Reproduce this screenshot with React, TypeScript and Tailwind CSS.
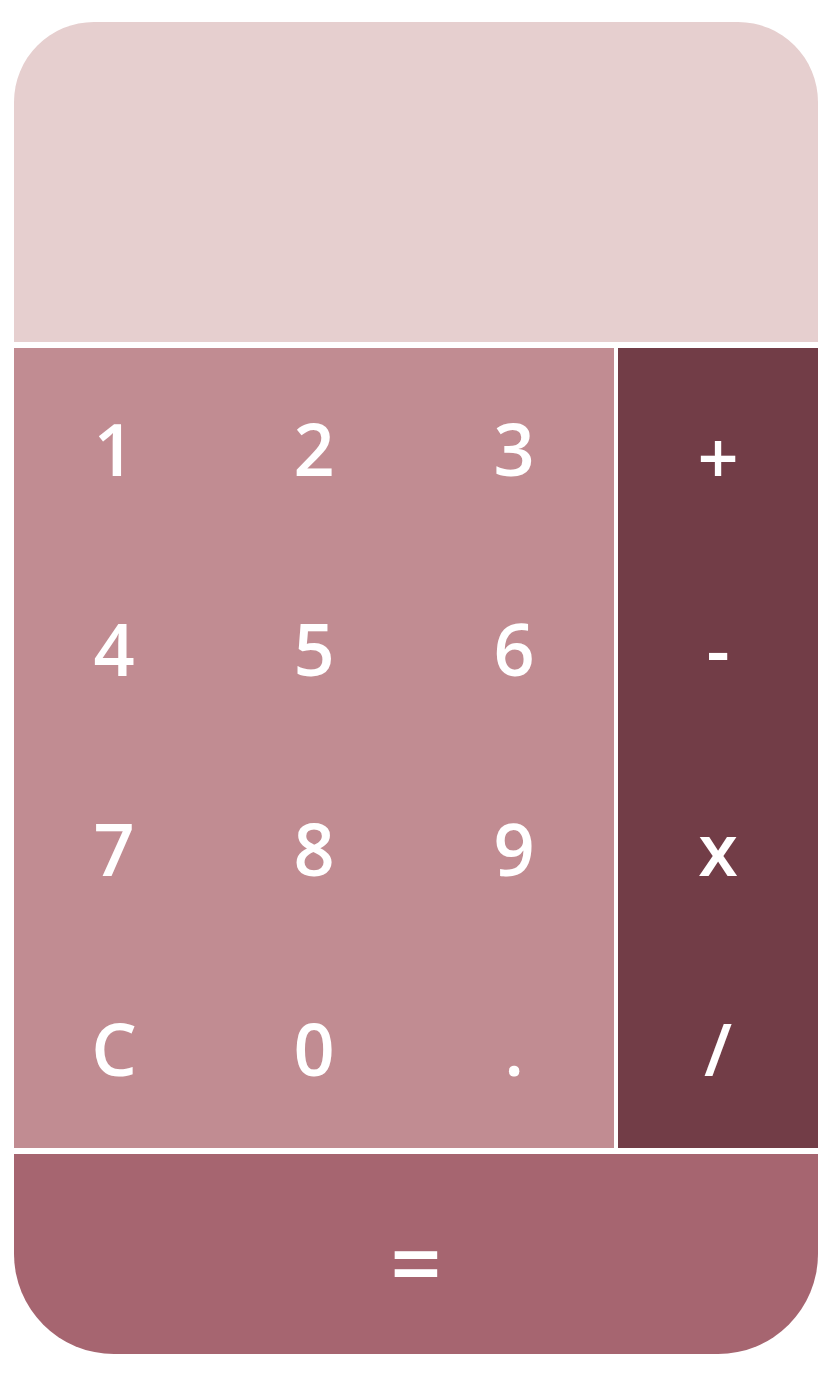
export default function App() {
  const digits = ["1", "2", "3", "4", "5", "6", "7", "8", "9", "C", "0", "."];
  const ops = ["+", "-", "x", "/"];

  return (
    <div className="min-h-screen w-[840px] bg-white pt-[22px] px-[14px] font-['Open_Sans',sans-serif] text-white">
      <div className="flex w-[804px] flex-col gap-[6px]">
        <div className="h-[320px] rounded-tl-[80px] rounded-tr-[80px] bg-[#e6cfcf]"></div>

        <div className="flex gap-[4px]">
          <div className="grid w-[600px] grid-cols-3 bg-[#c18c92]">
            {digits.map((d) => (
              <button key={d} className="flex h-[200px] items-center justify-center text-[72px] font-semibold leading-none">
                {d}
              </button>
            ))}
          </div>
          <div className="flex w-[200px] flex-col bg-[#723d47]">
            {ops.map((o) => (
              <button
                key={o}
                className={
                  o === "+"
                    ? "flex h-[200px] items-center justify-center pt-[16px] text-[72px] font-semibold leading-none"
                    : "flex h-[200px] items-center justify-center text-[72px] font-semibold leading-none"
                }
              >
                {o}
              </button>
            ))}
          </div>
        </div>

        <button className="flex h-[200px] items-center justify-center rounded-bl-[100px] rounded-br-[100px] bg-[#a66570] pt-[14px] text-[90px] font-semibold leading-none">
          =
        </button>
      </div>
    </div>
  );
}
